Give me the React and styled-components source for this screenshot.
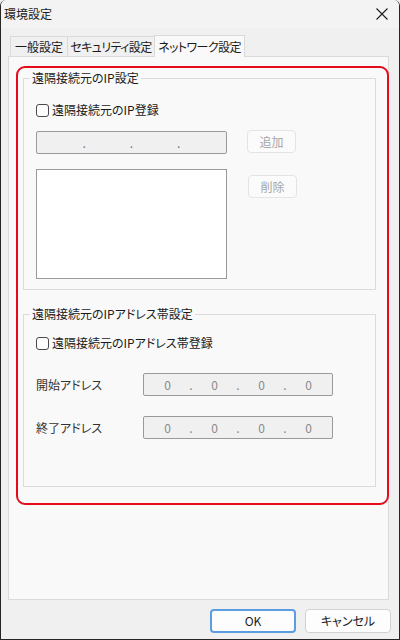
import styled, { createGlobalStyle } from 'styled-components'

const GlobalStyle = createGlobalStyle`
  html, body {
    margin: 0;
    padding: 0;
    background: #f0f0f0;
  }
  body {
    font-family: "Noto Sans CJK JP", "Noto Sans", sans-serif;
    font-size: 12px;
    line-height: 16px;
    color: #1b1b1b;
    font-feature-settings: "palt";
  }
  * {
    box-sizing: border-box;
  }
`

const Window = styled.div`
  width: 400px;
  height: 640px;
  display: flex;
  flex-direction: column;
  background: #f0f0f0;
  border: 1px solid #262626;
  border-top: none;
  border-top-left-radius: 6px;
  border-top-right-radius: 6px;
  overflow: hidden;
`

const TitleBar = styled.div`
  height: 28px;
  flex: none;
  display: flex;
  align-items: center;
  justify-content: space-between;
  padding-left: 3px;
  background: #f3f3f3;
`

const CloseButton = styled.span`
  width: 34px;
  height: 28px;
  display: flex;
  align-items: center;
  justify-content: center;
`

const Body = styled.div`
  flex: 1;
  display: flex;
  flex-direction: column;
  padding: 0 8px 0 7px;
`

const TabRow = styled.div`
  height: 28px;
  flex: none;
  display: flex;
  align-items: flex-end;
  padding-left: 2px;
`

const Tab = styled.div`
  position: relative;
  width: ${(p) => p.$width}px;
  height: ${(p) => (p.$active ? 22 : 20)}px;
  margin-bottom: ${(p) => (p.$active ? -1 : 0)}px;
  margin-right: -1px;
  z-index: ${(p) => (p.$active ? 1 : 0)};
  display: flex;
  align-items: center;
  justify-content: center;
  background: ${(p) => (p.$active ? '#f9f9f9' : '#f0f0f0')};
  border: 1px solid #dadada;
  border-bottom: none;
  white-space: nowrap;
  letter-spacing: ${(p) => (p.$kana ? -0.6 : 0)}px;
`

const Panel = styled.div`
  flex: 1;
  margin-right: 2px;
  background: #f9f9f9;
  border: 1px solid #dadada;
  padding: 9px 0 0 7px;
`

const RedFrame = styled.div`
  width: 373px;
  display: flex;
  flex-direction: column;
  gap: 16px;
  padding: 2px 0 16px 5px;
  border: 2px solid #e60a1a;
  border-radius: 9px;
`

const GroupBox = styled.fieldset`
  width: 353px;
  margin: 0;
  padding: 0;
  min-width: 0;
  border: 1px solid #dcdcdc;
`

const Legend = styled.legend`
  margin-left: 6px;
  padding: 0 2px;
  line-height: 16px;
  color: #1b1b1b;
`

const GroupBody = styled.div`
  display: flex;
  flex-direction: column;
  padding: ${(p) => p.$pad};
`

const CheckRow = styled.label`
  height: 16px;
  display: flex;
  align-items: center;
  gap: 3px;
`

const CheckBox = styled.span`
  width: 13px;
  height: 13px;
  border: 1px solid #4a4a4a;
  border-radius: 3px;
  background: #fdfdfd;
`

const Row = styled.div`
  display: flex;
  align-items: flex-start;
  margin-top: ${(p) => p.$top}px;
`

const IpField = styled.div`
  width: ${(p) => p.$width}px;
  height: 23px;
  margin-top: ${(p) => p.$offset || 0}px;
  display: flex;
  align-items: center;
  padding: 0 2px;
  background: #f0f0f0;
  border: 1px solid #9a9a9a;
  border-radius: 2px;
  color: #8a8a8a;
`

const Segment = styled.span`
  flex: 1;
  text-align: center;
`

const Dot = styled.span`
  width: 4px;
  text-align: center;
  color: ${(p) => (p.$dim ? '#6b7a8c' : '#8a8a8a')};
`

const SmallButton = styled.div`
  width: 49px;
  height: 23px;
  margin-left: ${(p) => p.$left}px;
  margin-top: ${(p) => p.$top || 0}px;
  display: flex;
  align-items: center;
  justify-content: center;
  background: #fbfbfb;
  border: 1px solid #e4e4e4;
  border-radius: 4px;
  color: #a6a6a6;
`

const ListBox = styled.div`
  width: 191px;
  height: 110px;
  background: #ffffff;
  border: 1px solid #9a9a9a;
`

const FieldLabel = styled.span`
  width: 107px;
  height: 23px;
  display: flex;
  align-items: center;
  color: #333333;
`

const Footer = styled.div`
  flex: none;
  display: flex;
  justify-content: flex-end;
  gap: 9px;
  padding: 9px 0 6px;
`

const DialogButton = styled.div`
  width: 86px;
  height: 24px;
  display: flex;
  align-items: center;
  justify-content: center;
  background: #fdfdfd;
  border: ${(p) => (p.$primary ? '2px solid #5b9de0' : '1px solid #d2d2d2')};
  border-radius: 4px;
  color: #1b1b1b;
`

const IpInput = ({ width, offset, values }) => (
  <IpField $width={width} $offset={offset}>
    {values.map((v, i) => (
      <span key={i} style={{ display: 'contents' }}>
        {i > 0 && <Dot $dim={!v}>.</Dot>}
        <Segment>{v}</Segment>
      </span>
    ))}
  </IpField>
)

const tabs = [
  { label: '一般設定', width: 58 },
  { label: 'セキュリティ設定', width: 88, kana: true },
  { label: 'ネットワーク設定', width: 91, kana: true, active: true },
]

export default function App() {
  return (
    <>
      <GlobalStyle />
      <Window>
        <TitleBar>
          <span>環境設定</span>
          <CloseButton>
            <svg width="12" height="12" viewBox="0 0 12 12">
              <path d="M0.5 0.5 L11.5 11.5 M11.5 0.5 L0.5 11.5" stroke="#1f1f1f" strokeWidth="1.1" fill="none" />
            </svg>
          </CloseButton>
        </TitleBar>
        <Body>
          <TabRow>
            {tabs.map((t) => (
              <Tab key={t.label} $width={t.width} $active={t.active} $kana={t.kana}>
                {t.label}
              </Tab>
            ))}
          </TabRow>
          <Panel>
            <RedFrame>
              <GroupBox>
                <Legend>遠隔接続元のIP設定</Legend>
                <GroupBody $pad="16px 12px 10px">
                  <CheckRow>
                    <CheckBox />
                    遠隔接続元のIP登録
                  </CheckRow>
                  <Row $top={12}>
                    <IpInput width={191} offset={1} values={['', '', '', '']} />
                    <SmallButton $left={20}>追加</SmallButton>
                  </Row>
                  <Row $top={15}>
                    <ListBox />
                    <SmallButton $left={21} $top={6}>削除</SmallButton>
                  </Row>
                </GroupBody>
              </GroupBox>
              <GroupBox>
                <Legend>遠隔接続元のIPアドレス帯設定</Legend>
                <GroupBody $pad="13px 12px 47px">
                  <CheckRow>
                    <CheckBox />
                    遠隔接続元のIPアドレス帯登録
                  </CheckRow>
                  <Row $top={22}>
                    <FieldLabel>開始アドレス</FieldLabel>
                    <IpInput width={190} values={['0', '0', '0', '0']} />
                  </Row>
                  <Row $top={20}>
                    <FieldLabel>終了アドレス</FieldLabel>
                    <IpInput width={190} values={['0', '0', '0', '0']} />
                  </Row>
                </GroupBody>
              </GroupBox>
            </RedFrame>
          </Panel>
          <Footer>
            <DialogButton $primary>OK</DialogButton>
            <DialogButton>キャンセル</DialogButton>
          </Footer>
        </Body>
      </Window>
    </>
  )
}
